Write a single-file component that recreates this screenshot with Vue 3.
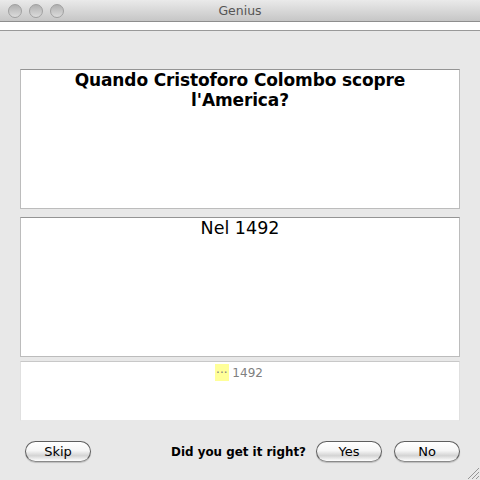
<template>
  <div class="window">
    <div class="titlebar">
      <div class="lights">
        <span class="light"></span>
        <span class="light"></span>
        <span class="light"></span>
      </div>
      <span class="title">Genius</span>
    </div>
    <div class="toolbar"></div>
    <div class="content">
      <div class="box question">Quando Cristoforo Colombo scopre<br />l'America?</div>
      <div class="box answer">Nel 1492</div>
      <div class="box hint"><mark>···</mark> 1492</div>
      <div class="actions">
        <button class="btn skip">Skip</button>
        <span class="prompt">Did you get it right?</span>
        <button class="btn">Yes</button>
        <button class="btn">No</button>
      </div>
    </div>
    <svg class="grip" width="11" height="11" viewBox="0 0 11 11">
      <path d="M0 11 11 0M4 11l7-7M8 11l3-3" stroke="#969696" stroke-width="1" fill="none" />
    </svg>
  </div>
</template>

<script setup>
</script>

<style>
html,
body {
  margin: 0;
  background: #e8e8e8;
}
</style>

<style scoped>
.window {
  position: relative;
  width: 480px;
  height: 480px;
  overflow: hidden;
  background: #e8e8e8;
  font-family: "DejaVu Sans", sans-serif;
  color: #000;
}

.titlebar {
  box-sizing: border-box;
  height: 22px;
  display: flex;
  align-items: center;
  justify-content: center;
  position: relative;
  background: linear-gradient(#eaeaea, #c6c6c6);
  border-bottom: 1px solid #8e8e8e;
}

.lights {
  position: absolute;
  left: 8px;
  top: 4px;
  display: flex;
  gap: 7px;
}

.light {
  box-sizing: border-box;
  width: 14px;
  height: 14px;
  border-radius: 50%;
  border: 1px solid #a0a0a0;
  background: linear-gradient(#b0b0b0, #dcdcdc);
}

.title {
  font-size: 12.5px;
  color: #555;
}

.toolbar {
  box-sizing: border-box;
  height: 9px;
  background: #fff;
  border-bottom: 1px solid #999;
}

.content {
  padding: 38px 20px 0;
}

.box {
  box-sizing: border-box;
  width: 440px;
  background: #fff;
  border: 1px solid #bcbcbc;
  border-top-color: #949494;
  text-align: center;
}

.question {
  height: 140px;
  margin-bottom: 8px;
  font-size: 17px;
  letter-spacing: -0.13px;
  line-height: 20px;
  font-weight: bold;
}

.answer {
  height: 140px;
  margin-bottom: 4px;
  font-size: 17.5px;
  line-height: 20px;
}

.hint {
  height: 60px;
  border-color: #c8c8c8 #e0e0e0 #e8e8e8;
  font-size: 12px;
  line-height: 14px;
  padding: 4px 2px 0 0;
  color: #808080;
}

mark {
  padding: 2px 1px 1px;
  background: #ffff99;
  color: #808080;
}

.actions {
  display: flex;
  align-items: center;
  margin-top: 20px;
  padding: 0 0 0 5px;
}

.btn {
  box-sizing: border-box;
  width: 66px;
  height: 21px;
  padding: 0;
  border: 1px solid #5e5e5e;
  border-bottom-color: #8a8a8a;
  border-radius: 11px;
  background: linear-gradient(#fff 0%, #f6f6f6 45%, #d4d4d4 72%, #fff 100%);
  box-shadow: 0 1px 1px #bdbdbd;
  font-family: "DejaVu Sans", sans-serif;
  font-size: 13px;
  color: #000;
}

.btn + .btn {
  margin-left: 12px;
}

.skip {
  margin-right: auto;
}

.prompt {
  font-size: 11.9px;
  font-weight: bold;
  margin-right: 10px;
}

.grip {
  position: absolute;
  right: 1px;
  bottom: 1px;
}
</style>
